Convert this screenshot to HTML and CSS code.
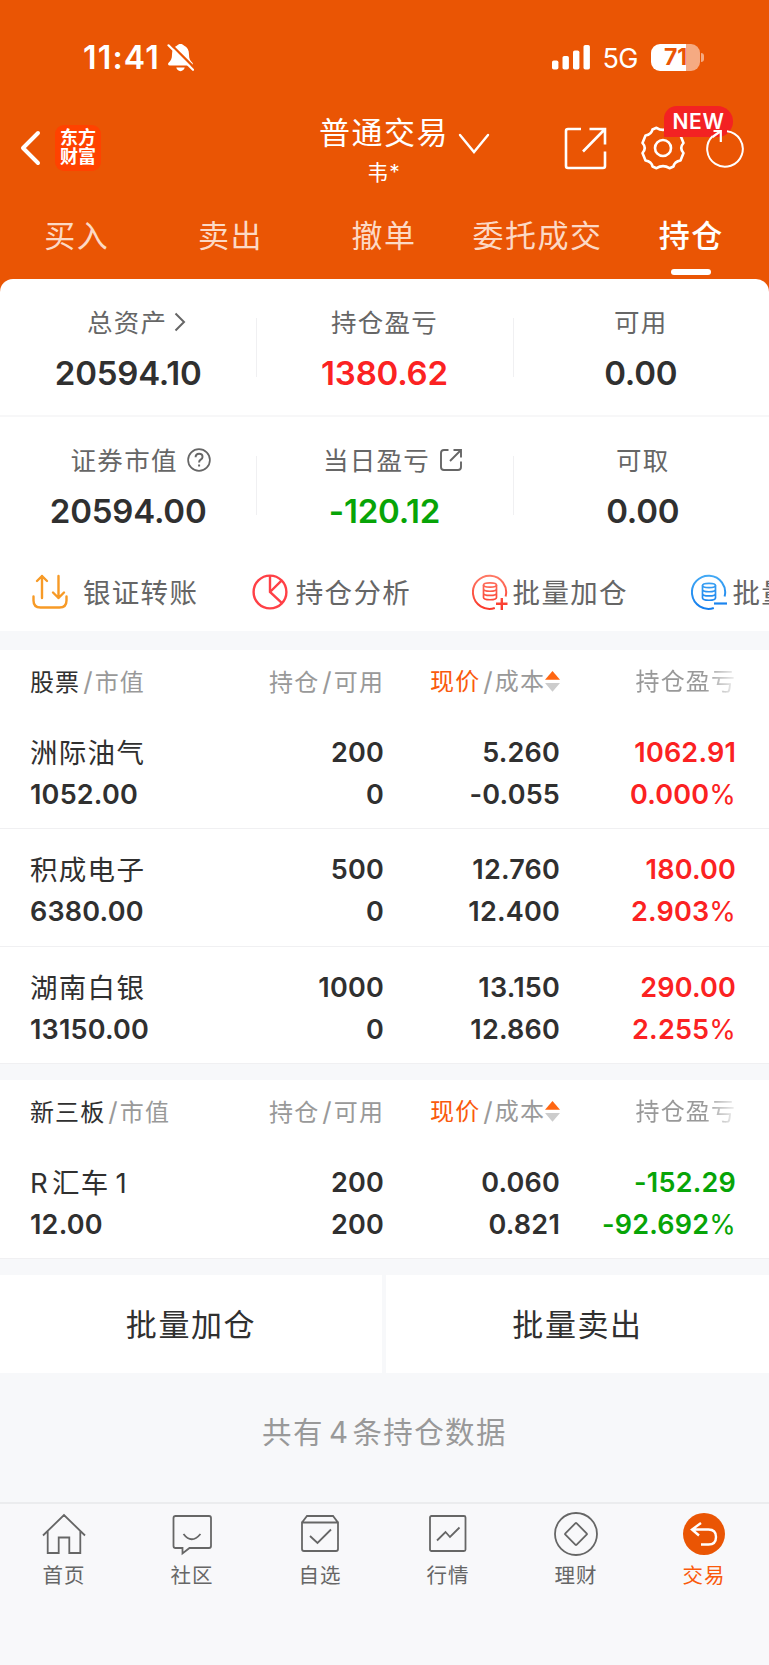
FILE: index.html
```html
<!DOCTYPE html>
<html lang="zh-CN">
<head>
    <meta charset="UTF-8">
    <meta name="viewport" content="width=device-width, initial-scale=1.0">
    <title>普通交易 - 持仓</title>
    <link rel="stylesheet" href="styles.css">
</head>
<body>

    <header class="header">
        <div class="status-bar">
            <div class="status-left">
                <span class="time">11:41</span>
                <svg class="bell" width="27" height="29" viewBox="0 0 27 29">
                    <path d="M13.500 1c-1.500 0-2.800.6-3.400 1.600C6.500 4.300 5 7.500 5 11.500c0 4-1 6-3.200 8C.4 20.900 1 22.600 2.800 22.600h21.400c1.800 0 2.200-1.900 1-3C23 17.500 22 15.500 22 11.500c0-4-1.500-7.200-5.100-8.900C16.300 1.600 15 1 13.500 1zM9.300 24.600h8.400c-.5 2-2.100 3.600-4.200 3.600s-3.700-1.600-4.200-3.600z" fill="#fff"/>
                    <path d="M3.500 1L28 25.500" stroke="#ea5504" stroke-width="2.400"/>
                    <path d="M1.500 2.300L26 26.800" stroke="#fff" stroke-width="2.200" stroke-linecap="round"/>
                </svg>
            </div>
            <div class="status-right">
                <svg width="38" height="25" viewBox="0 0 38 25" fill="#fff">
                    <rect x="0" y="15.500" width="6.400" height="9" rx="1.800"/>
                    <rect x="10.500" y="11" width="6.400" height="13.500" rx="1.800"/>
                    <rect x="21" y="5.500" width="6.400" height="19" rx="1.800"/>
                    <rect x="31.500" y="0" width="6.400" height="24.500" rx="1.800"/>
                </svg>
                <span class="network">5G</span>
                <div class="battery"><span>71</span></div>
                <i class="battery-cap"></i>
            </div>
        </div>

        <div class="nav-bar">
            <svg class="back" width="21" height="36" viewBox="0 0 21 36" fill="none" stroke="#fff" stroke-width="4" stroke-linecap="round" stroke-linejoin="round">
                <path d="M18 3L3 18l15 15"/>
            </svg>
            <div class="logo">东方<br>财富</div>
            <div class="nav-title">
                <h1>普通交易</h1>
                <p>韦*</p>
            </div>
            <svg class="title-arrow" width="32" height="22" viewBox="0 0 32 22" fill="none" stroke="#fff" stroke-width="2.400" stroke-linecap="round">
                <path d="M2 2l14 17L30 2"/>
            </svg>
            <svg class="share" width="43" height="43" viewBox="0 0 43 43" fill="none" stroke="#fff" stroke-width="2.600">
                <path d="M17 2H4Q2 2 2 4v35q0 2 2 2h35q2 0 2-2V24.500"/>
                <path d="M25.500 2H41v15.500M41 2L19 24.500"/>
            </svg>
            <svg class="gear" width="44" height="44" viewBox="0 0 44 44" fill="none" stroke="#fff" stroke-width="2.600" stroke-linejoin="round">
                <circle cx="22" cy="22" r="8"/>
                <path d="M15.500 1.800Q22 6 28.500 1.800L32.500 3.500Q33.500 8.500 39.500 9.500L42.500 17Q38 22 42.500 27L39.500 34.500Q33.500 35.500 32.500 40.500L28.500 42.200Q22 38 15.500 42.200L11.500 40.500Q10.500 35.500 4.500 34.500L1.500 27Q6 22 1.500 17L4.500 9.500Q10.500 8.500 11.500 3.500z"/>
            </svg>
            <div class="refresh">
                <span class="badge">NEW</span>
                <svg width="40" height="42" viewBox="0 0 40 42" fill="none" stroke="#fff" stroke-width="2">
                    <path d="M22 5.200A17.800 17.800 0 1 1 7.500 10.200"/>
                    <path d="M8.500 5h7.300v11M15.800 5L7.500 11" stroke-width="2.200"/>
                </svg>
            </div>
        </div>

        <nav class="tabs">
            <a>买入</a>
            <a>卖出</a>
            <a>撤单</a>
            <a>委托成交</a>
            <a class="active">持仓</a>
        </nav>
    </header>

    <main>
        <section class="summary">
            <div class="summary-row">
                <div class="cell">
                    <div class="label wide">总资产
                        <svg class="more" width="12" height="20" viewBox="0 0 12 20" fill="none" stroke="#666" stroke-width="2"><path d="M1.500 1.500L10 10l-8.500 8.500"/></svg>
                    </div>
                    <div class="value">20594.10</div>
                </div>
                <div class="cell">
                    <div class="label">持仓盈亏</div>
                    <div class="value red">1380.62</div>
                </div>
                <div class="cell">
                    <div class="label">可用</div>
                    <div class="value">0.00</div>
                </div>
            </div>
            <div class="summary-row">
                <div class="cell">
                    <div class="label wider">证券市值
                        <svg class="help" width="24" height="24" viewBox="0 0 24 24" fill="none" stroke="#666" stroke-width="1.700">
                            <circle cx="12" cy="12" r="10.900"/>
                            <path d="M8.600 9.300q0-3.500 3.500-3.500t3.400 3.200q0 1.600-1.800 2.700-1.600 1-1.600 2.800M12.100 16.400v2.200" stroke-width="2"/>
                        </svg>
                    </div>
                    <div class="value">20594.00</div>
                </div>
                <div class="cell">
                    <div class="label wide">当日盈亏
                        <svg class="open" width="24" height="24" viewBox="0 0 24 24" fill="none" stroke="#666" stroke-width="1.900">
                            <path d="M9.500 2H5Q2 2 2 5v14q0 3 3 3h14q3 0 3-3v-5.500M14.500 2H22v7.500M22 2L11 13"/>
                        </svg>
                    </div>
                    <div class="value green">-120.12</div>
                </div>
                <div class="cell last">
                    <div class="label">可取</div>
                    <div class="value">0.00</div>
                </div>
            </div>

            <div class="actions">
                <div class="action transfer">
                    <svg width="36" height="36" viewBox="0 0 36 36" fill="none" stroke="#f79a26" stroke-width="2.400" stroke-linecap="round" stroke-linejoin="round">
                        <path d="M1.500 22.500v4q0 7 7 7h19q7 0 7-7v-4"/>
                        <path d="M10 24V2M5 7l5-5 5 5M26.500 2v22M21 18.500l5.500 5.500 5.500-5.500"/>
                    </svg>
                    <span>银证转账</span>
                </div>
                <div class="action">
                    <svg width="36" height="36" viewBox="0 0 36 36" fill="none" stroke="#ff4046" stroke-width="2.400">
                        <circle cx="18" cy="18" r="16.400"/>
                        <path d="M18 1.600V18l12 11.200M18 18L29.500 6.600"/>
                    </svg>
                    <span>持仓分析</span>
                </div>
                <div class="action bulk">
                    <svg width="36" height="36" viewBox="0 0 36 36" fill="none" stroke="url(#red)" stroke-width="2">
                        <defs>
                            <linearGradient id="red" gradientUnits="userSpaceOnUse" x1="18" y1="0" x2="18" y2="36"><stop offset="0" stop-color="#ff7c68"/><stop offset="1" stop-color="#fa3628"/></linearGradient>
                        </defs>
                        <path d="M22.800 34A16.600 16.600 0 1 1 33.600 22.500"/>
                        <ellipse cx="18" cy="11" rx="6.500" ry="2.200" stroke-width="1.700"/>
                        <path d="M11.500 11v12.500c0 3 13 3 13 0V11M11.500 15c0 3 13 3 13 0M11.500 19.200c0 3 13 3 13 0" stroke-width="1.700"/>
                        <path d="M24 29.800h11.500M29.800 24v12" stroke-width="2.400"/>
                    </svg>
                    <span>批量加仓</span>
                </div>
                <div class="action bulk">
                    <svg width="36" height="36" viewBox="0 0 36 36" fill="none" stroke="url(#blue)" stroke-width="2">
                        <defs>
                            <linearGradient id="blue" gradientUnits="userSpaceOnUse" x1="18" y1="0" x2="18" y2="36"><stop offset="0" stop-color="#45abf5"/><stop offset="1" stop-color="#127ced"/></linearGradient>
                        </defs>
                        <path d="M22.800 34A16.600 16.600 0 1 1 33.600 22.500"/>
                        <ellipse cx="18" cy="11.500" rx="6.500" ry="2.200" stroke-width="1.700"/>
                        <path d="M11.500 11.500v12.500c0 3 13 3 13 0V11.500M11.500 15.500c0 3 13 3 13 0M11.500 19.700c0 3 13 3 13 0" stroke-width="1.700"/>
                        <path d="M24 29.400h12v.2H24z" stroke-width="2"/>
                    </svg>
                    <span>批量卖出</span>
                </div>
            </div>
        </section>

        <section class="holdings">
            <div class="holdings-head">
                <div><b>股票</b><i>/</i>市值</div>
                <div>持仓<i>/</i>可用</div>
                <div class="sort"><em>现价</em><i>/</i>成本<svg width="15" height="21" viewBox="0 0 15 21"><path d="M7.500 0L15 8.700H0z" fill="#ff6612"/><path d="M0 12h15l-7.500 8.700z" fill="#ccc"/></svg></div>
                <div class="fade">持仓盈亏</div>
            </div>
            <div class="stock">
                <div class="name">洲际油气</div><div>200</div><div>5.260</div><div class="red">1062.91</div>
                <div>1052.00</div><div>0</div><div>-0.055</div><div class="red">0.000<span class="pct">%</span></div>
            </div>
            <div class="stock">
                <div class="name">积成电子</div><div>500</div><div>12.760</div><div class="red">180.00</div>
                <div>6380.00</div><div>0</div><div>12.400</div><div class="red">2.903<span class="pct">%</span></div>
            </div>
            <div class="stock">
                <div class="name">湖南白银</div><div>1000</div><div>13.150</div><div class="red">290.00</div>
                <div>13150.00</div><div>0</div><div>12.860</div><div class="red">2.255<span class="pct">%</span></div>
            </div>
        </section>

        <section class="holdings">
            <div class="holdings-head">
                <div><b>新三板</b><i>/</i>市值</div>
                <div>持仓<i>/</i>可用</div>
                <div class="sort"><em>现价</em><i>/</i>成本<svg width="15" height="21" viewBox="0 0 15 21"><path d="M7.500 0L15 8.700H0z" fill="#ff6612"/><path d="M0 12h15l-7.500 8.700z" fill="#ccc"/></svg></div>
                <div class="fade">持仓盈亏</div>
            </div>
            <div class="stock">
                <div class="name mixed"><span>R</span>汇车<span>1</span></div><div>200</div><div>0.060</div><div class="green">-152.29</div>
                <div>12.00</div><div>200</div><div>0.821</div><div class="green">-92.692<span class="pct">%</span></div>
            </div>
        </section>

        <div class="batch">
            <button>批量加仓</button>
            <button>批量卖出</button>
        </div>

        <p class="total">共有<span>4</span>条持仓数据</p>
    </main>

    <footer class="tab-bar">
        <a>
            <svg width="46" height="46" viewBox="0 0 46 46">
                <path d="M2 24.500L23 4l21 20.500M6.700 20.500V42h11V26.500h10.600V42h11V20.500"/>
            </svg>
            首页
        </a>
        <a>
            <svg width="46" height="46" viewBox="0 0 46 46">
                <path d="M6 5h34q2 0 2 2v28q0 2-2 2H20.500l-7 5.500V37H6.500q-2 0-2-2V7q0-2 2-2zM14.500 23q8 10.500 17 0"/>
            </svg>
            社区
        </a>
        <a>
            <svg width="46" height="46" viewBox="0 0 46 46">
                <path d="M5 11.500h36V38q0 2-2 2H7q-2 0-2-2zM5 11.500l5-6.500h26l5 6.500M13 25l7.500 7L34 18.500"/>
            </svg>
            自选
        </a>
        <a>
            <svg width="46" height="46" viewBox="0 0 46 46">
                <rect x="5" y="5" width="35.500" height="35" rx="1.500"/>
                <path d="M12 29.500l8.500-8.500 4.500 5 9.500-9.500"/>
            </svg>
            行情
        </a>
        <a>
            <svg width="46" height="46" viewBox="0 0 46 46">
                <circle cx="23" cy="23" r="21"/>
                <rect x="15" y="15" width="16" height="16" rx="1" transform="rotate(45 23 23)"/>
            </svg>
            理财
        </a>
        <a class="active">
            <svg width="46" height="46" viewBox="0 0 46 46">
                <circle cx="23" cy="23" r="21" fill="#ea5504" stroke="none"/>
                <path d="M20 12l-9 6.500 7 6M11 18.500h16.500q7.500 0 7.500 7.500t-7.500 7.500H20"/>
            </svg>
            交易
        </a>
    </footer>

</body>
</html>
```
FILE: styles.css
```css
/* Reset */
* {
    margin: 0;
    padding: 0;
    box-sizing: border-box;
}

body {
    width: 769px;
    height: 1665px;
    overflow: hidden;
    display: flex;
    flex-direction: column;
    font-family: Inter, "Noto Sans CJK SC", sans-serif;
    background-color: #f7f8fa;
    color: #303030;
}

svg {
    display: block;
    flex: none;
}

i, em {
    font-style: normal;
}

.red { color: #fb2222; }
.green { color: #07a407; }

/* Header */
.header {
    height: 292px;
    background-color: #ea5504;
    color: #fff;
    flex: none;
}

.status-bar {
    height: 100px;
    padding: 15px 65px 0 83px;
    display: flex;
    justify-content: space-between;
}

.status-left,
.status-right {
    height: 85px;
    display: flex;
    align-items: center;
}

.time {
    font-size: 32px;
    font-weight: 600;
    letter-spacing: 1.2px;
}

.bell {
    margin-left: 7px;
}

.network {
    margin: 2px 13px 0 12px;
    font-size: 27px;
    letter-spacing: -0.5px;
}

.battery {
    width: 49px;
    height: 27px;
    border-radius: 9px;
    background: linear-gradient(to right, #fff 71%, #f5aa82 71%);
    color: #ea5504;
    font-size: 23px;
    font-weight: 700;
    line-height: 27px;
    text-align: center;
    letter-spacing: -0.2px;
}

.battery-cap {
    width: 3px;
    height: 9px;
    margin-left: 1px;
    border-radius: 0 3px 3px 0;
    background-color: #f5aa82;
}

.nav-bar {
    height: 94px;
    padding-left: 20px;
    display: flex;
    align-items: center;
}

.nav-bar > svg,
.logo {
    margin-top: 2px;
}

.logo {
    width: 46px;
    height: 46px;
    margin-left: 14px;
    padding-top: 3px;
    border-radius: 9px;
    background-color: #ff4200;
    font-size: 18px;
    font-weight: 700;
    line-height: 19px;
    text-align: center;
}

.nav-title {
    width: 130px;
    margin-left: 218px;
    padding-top: 7px;
    text-align: center;
    white-space: nowrap;
}

.nav-title h1 {
    font-size: 31px;
    font-weight: 400;
    line-height: 36px;
    letter-spacing: 1.5px;
}

.nav-title p {
    margin-top: 8px;
    font-size: 21px;
    line-height: 28px;
    letter-spacing: 1px;
}

.nav-bar .title-arrow {
    margin-left: 9px;
    margin-top: -6px;
}

.share { margin-left: 74px; }
.gear { margin-left: 34px; }

.refresh {
    position: relative;
    margin: 0 0 0 20px;
}

.refresh svg {
    position: relative;
    margin-top: 0;
}

/* the badge lies under the refresh arrow */
.badge {
    position: absolute;
    left: -41px;
    top: -20px;
    width: 69px;
    height: 31px;
    border-radius: 13px 16px 16px 0;
    background-color: #f32223;
    font-size: 21px;
    font-weight: 600;
    line-height: 31px;
    text-align: center;
    letter-spacing: 0.6px;
}

.tabs {
    height: 98px;
    display: grid;
    grid-template-columns: repeat(5, 153.6px);
}

.tabs a {
    display: flex;
    flex-direction: column;
    align-items: center;
    padding-top: 19px;
    font-size: 31px;
    line-height: 45px;
    letter-spacing: 1.5px;
    color: #fcd9c5;
}

.tabs .active {
    color: #fff;
    font-weight: 500;
}

.tabs .active::after {
    content: "";
    width: 40px;
    height: 6px;
    margin-top: 11px;
    border-radius: 3px;
    background-color: #fff;
}

/* Account summary */
.summary {
    position: relative;
    height: 352px;
    margin-top: -13px;
    border-radius: 13px 13px 0 0;
    background-color: #fff;
}

.summary-row {
    height: 137px;
    padding-top: 23px;
    display: grid;
    grid-template-columns: repeat(3, 1fr);
}

.summary-row:first-child {
    height: 138px;
    border-bottom: 2px solid #f7f7f8;
}

.cell {
    position: relative;
    display: flex;
    flex-direction: column;
    align-items: center;
}

.cell + .cell::before {
    content: "";
    position: absolute;
    left: 0;
    top: 16px;
    width: 1px;
    height: 59px;
    background-color: #f0f0f2;
}

.label {
    height: 36px;
    display: flex;
    align-items: center;
    font-size: 25.5px;
    letter-spacing: 1.3px;
    color: #666;
}

.label svg {
    margin-top: 4px;
}

.wide { padding-left: 17px; }
.wider { padding-left: 25px; }
.last { padding-left: 4px; }

.more { margin-left: 7px; }
.help, .open { margin-left: 9px; }

.value {
    margin-top: 14px;
    font-size: 33px;
    font-weight: 600;
    line-height: 42px;
    letter-spacing: -0.2px;
}

.actions {
    height: 77px;
    padding: 0 0 1px 32px;
    display: flex;
    overflow: hidden;
}

.action {
    flex: 0 0 219.8px;
    display: flex;
    align-items: center;
    gap: 8px;
    font-size: 27.5px;
    letter-spacing: 1.3px;
    color: #666;
}

.action span {
    margin-top: -3px;
}

.transfer {
    gap: 15px;
}

.bulk {
    gap: 5px;
}

/* Holdings tables */
.holdings {
    margin-top: 19px;
    background-color: #fff;
}

.holdings + .holdings {
    margin-top: 16px;
}

.holdings-head,
.stock {
    display: grid;
    grid-template-columns: 170px 184px 176px 176px;
    padding-left: 30px;
    text-align: right;
    white-space: nowrap;
}

.holdings-head > :first-child,
.stock > :nth-child(4n+1) {
    text-align: left;
}

.holdings-head {
    height: 62px;
    line-height: 64px;
    font-size: 24px;
    letter-spacing: 1.1px;
    color: #999;
}

.holdings-head b {
    font-weight: 400;
    color: #303030;
}

.holdings-head i {
    margin: 0 1px 0 3px;
    font-size: 26px;
}

.holdings-head em {
    color: #fa5a0c;
}

.sort {
    display: flex;
    justify-content: flex-end;
}

.sort svg {
    margin-top: 21px;
}

.fade {
    -webkit-mask-image: linear-gradient(to right, #000 82%, transparent 103%);
    mask-image: linear-gradient(to right, #000 82%, transparent 103%);
}

.stock {
    height: 117.300px;
    padding-top: 20px;
    grid-template-rows: 42px 42px;
    line-height: 42px;
    font-size: 27px;
    font-weight: 600;
    letter-spacing: 0.2px;
    border-bottom: 1px solid #f0f0f2;
}

.name {
    font-size: 27.5px;
    font-weight: 400;
    letter-spacing: 1.3px;
}

.pct {
    font-weight: 400;
}

.mixed span:first-child { margin-right: 3px; }
.mixed span:last-child { margin-left: 6px; }

/* Batch buttons */
.batch {
    height: 98px;
    margin-top: 16px;
    display: grid;
    grid-template-columns: 382px 383px;
    gap: 4px;
}

.batch button {
    padding-bottom: 3px;
    border: none;
    background-color: #fff;
    font-family: inherit;
    font-size: 31px;
    letter-spacing: 1.6px;
    color: #303030;
}

.total {
    margin-top: 36px;
    font-size: 29.5px;
    line-height: 46px;
    letter-spacing: 1.4px;
    text-align: center;
    color: #999;
}

.total span {
    margin: 0 3px 0 5px;
}

/* Bottom tab bar */
.tab-bar {
    margin-top: auto;
    height: 163px;
    flex: none;
    padding-top: 7px;
    display: grid;
    grid-template-columns: repeat(6, 128px);
    border-top: 2px solid #ebecee;
    background-color: #f8f8fa;
}

.tab-bar a {
    display: flex;
    flex-direction: column;
    align-items: center;
    font-size: 20.5px;
    line-height: 30px;
    letter-spacing: 1px;
    color: #666;
}

.tab-bar svg {
    margin-bottom: 4px;
    fill: none;
    stroke: #666;
    stroke-width: 1.8;
}

.tab-bar .active {
    color: #fa5a0c;
}

.tab-bar .active svg {
    stroke: #fff;
    stroke-width: 2.4;
}
```
